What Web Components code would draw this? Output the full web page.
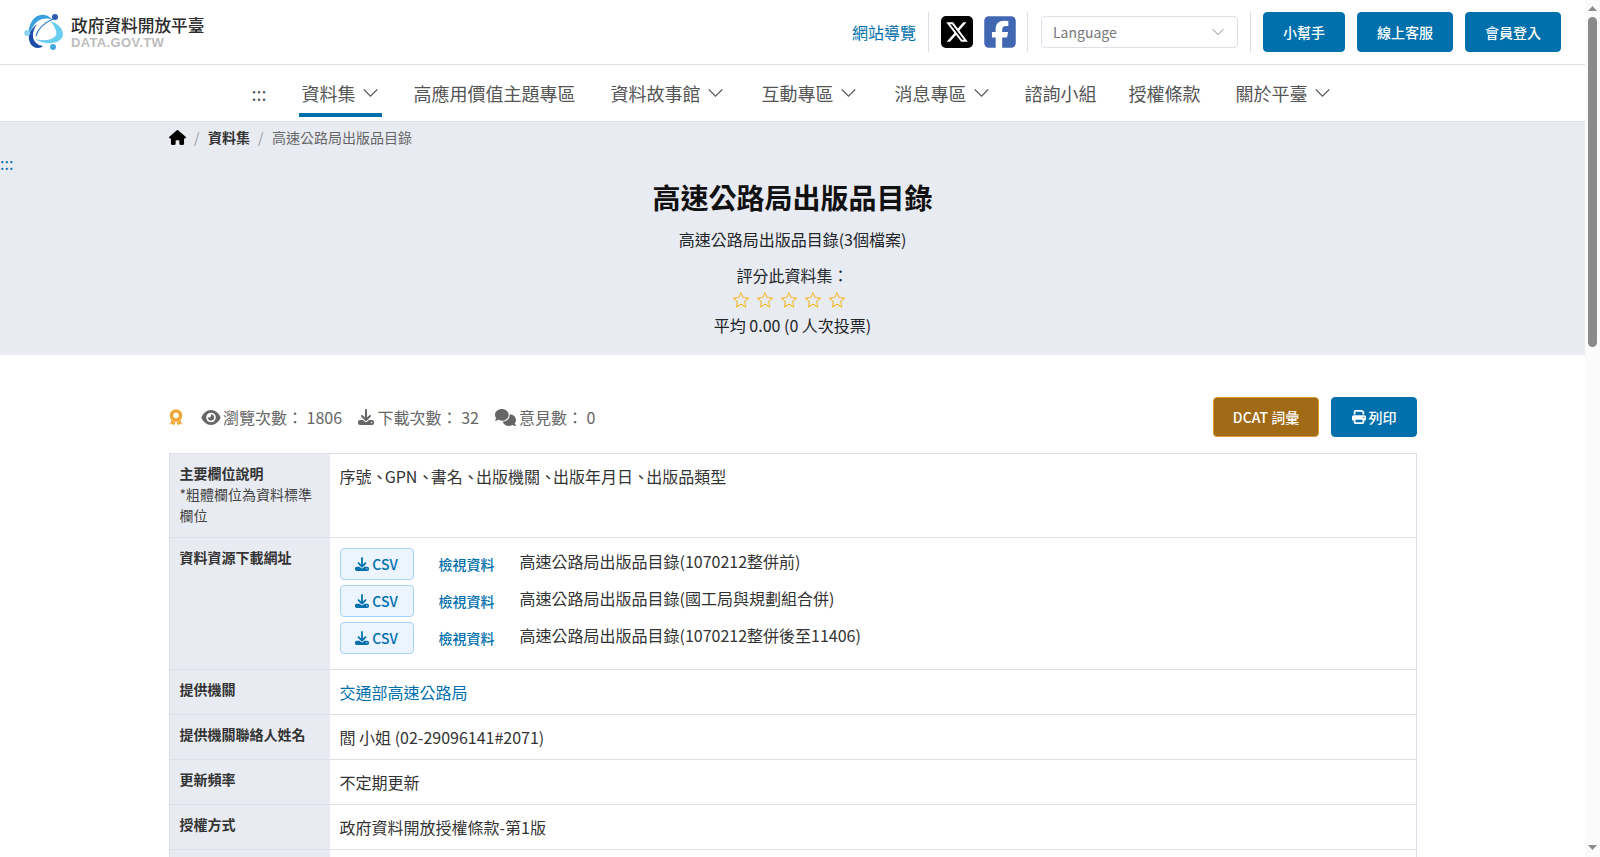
<!DOCTYPE html>
<html lang="zh-Hant"><head><meta charset="utf-8"><title>高速公路局出版品目錄</title>
<style>
html,body{margin:0;padding:0;height:857px;overflow:hidden;background:#fff}
body{font-family:"Noto Sans CJK TC","Noto Sans",sans-serif;color:#212529;font-size:16px;line-height:1.5}
.cm{letter-spacing:-2.8px}
</style></head><body>
<app-shell>
  <site-header></site-header>
  <main-nav></main-nav>
  <dataset-banner></dataset-banner>
  <main-content>
    <stats-bar></stats-bar>
    <data-table>
      <data-row label="主要欄位說明" note="*粗體欄位為資料標準欄位" first><span>序號<span class="cm">、</span>GPN<span class="cm">、</span>書名<span class="cm">、</span>出版機關<span class="cm">、</span>出版年月日<span class="cm">、</span>出版品類型</span></data-row>
      <data-row label="資料資源下載網址" tall>
        <download-item>高速公路局出版品目錄(1070212整併前)</download-item>
        <download-item>高速公路局出版品目錄(國工局與規劃組合併)</download-item>
        <download-item>高速公路局出版品目錄(1070212整併後至11406)</download-item>
      </data-row>
      <data-row label="提供機關" link>交通部高速公路局</data-row>
      <data-row label="提供機關聯絡人姓名">閻 小姐 (02-29096141#2071)</data-row>
      <data-row label="更新頻率">不定期更新</data-row>
      <data-row label="授權方式">政府資料開放授權條款-第1版</data-row>
      <data-row></data-row>
    </data-table>
  </main-content>
</app-shell>
<script>
const FONT='"Noto Sans CJK TC","Noto Sans",sans-serif';
const chev='<svg width="15" height="16" viewBox="0 0 15 16" fill="none" stroke="#555" stroke-width="1.1"><path d="M.8 4.500 7.500 11.200l6.700-6.700"/></svg>';
const P={
 home:['0 0 576 512','M575.8 255.5c0 18-15 32.1-32 32.1h-32l.7 160.2c0 2.7-.2 5.4-.5 8.1V472c0 22.1-17.9 40-40 40H456c-1.1 0-2.2 0-3.3-.1c-1.4 .1-2.8 .1-4.2 .1H416 392c-22.1 0-40-17.9-40-40V448 384c0-17.7-14.3-32-32-32H256c-17.7 0-32 14.3-32 32v64 24c0 22.1-17.9 40-40 40H160 128.1c-1.5 0-3-.1-4.5-.2c-1.2 .1-2.4 .2-3.6 .2H104c-22.1 0-40-17.9-40-40V360c0-.9 0-1.9 .1-2.8V287.6H32c-18 0-32-14-32-32.1c0-9 3-17 10-24L266.4 8c7-7 15-8 22-8s15 2 21 7L564.8 231.5c8 7 12 15 11 24z'],
 dl:['0 0 512 512','M288 32c0-17.7-14.3-32-32-32s-32 14.3-32 32V274.7l-73.4-73.4c-12.5-12.5-32.8-12.5-45.3 0s-12.5 32.8 0 45.3l128 128c12.5 12.5 32.8 12.5 45.3 0l128-128c12.5-12.5 12.5-32.8 0-45.3s-32.8-12.5-45.3 0L288 274.7V32zM64 352c-35.3 0-64 28.7-64 64v32c0 35.3 28.7 64 64 64H448c35.3 0 64-28.7 64-64V416c0-35.3-28.7-64-64-64H346.5l-45.3 45.3c-25 25-65.5 25-90.5 0L165.5 352H64zm368 56a24 24 0 1 1 0 48 24 24 0 1 1 0-48z'],
 eye:['0 0 576 512','M288 32c-80.8 0-145.5 36.8-192.6 80.6C48.6 156 17.3 208 2.5 243.7c-3.3 7.9-3.3 16.7 0 24.6C17.3 304 48.6 356 95.4 399.4C142.5 443.2 207.2 480 288 480s145.5-36.8 192.6-80.6c46.8-43.5 78.1-95.4 93-131.1c3.3-7.9 3.3-16.7 0-24.6c-14.9-35.7-46.2-87.7-93-131.1C433.5 68.8 368.8 32 288 32zM144 256a144 144 0 1 1 288 0 144 144 0 1 1 -288 0zm144-64c0 35.3-28.7 64-64 64c-7.1 0-13.9-1.2-20.3-3.3c-5.5-1.8-11.9 1.6-11.7 7.4c.3 6.9 1.3 13.8 3.2 20.7c13.7 51.2 66.4 81.6 117.6 67.9s81.6-66.4 67.9-117.6c-11.1-41.5-47.8-69.4-88.6-71.1c-5.8-.2-9.2 6.1-7.4 11.7c2.1 6.4 3.3 13.2 3.3 20.3z'],
 com:['0 0 640 512','M208 352c114.9 0 208-78.8 208-176S322.9 0 208 0S0 78.8 0 176c0 38.6 14.7 74.3 39.6 103.4c-3.5 9.4-8.7 17.7-14.2 24.7c-4.8 6.2-9.7 11-13.3 14.3c-1.8 1.6-3.3 2.9-4.3 3.7c-.5 .4-.9 .7-1.1 .8l-.2 .2 0 0 0 0C1 327.2-1.4 334.4 .8 340.9S9.1 352 16 352c21.8 0 43.8-5.6 62.1-12.5c9.2-3.5 17.8-7.4 25.3-11.4C134.1 343.3 169.8 352 208 352zM448 176c0 112.3-99.1 196.9-216.5 207C255.8 457.4 336.4 512 432 512c38.2 0 73.9-8.7 104.7-23.9c7.5 4 16 7.9 25.2 11.4c18.3 6.9 40.3 12.5 62.1 12.5c6.9 0 13.1-4.5 15.2-11.1c2.1-6.6-.2-13.8-5.8-17.9l0 0 0 0-.2-.2c-.2-.2-.6-.4-1.1-.8c-1-.8-2.5-2-4.3-3.7c-3.6-3.3-8.5-8.1-13.3-14.3c-5.5-7-10.7-15.4-14.2-24.7c24.9-29 39.6-64.7 39.6-103.4c0-92.8-84.9-168.9-192.6-175.5c.4 5.1 .6 10.3 .6 15.5z'],
 print:['0 0 512 512','M128 0C92.7 0 64 28.7 64 64v96h64V64H354.7L384 93.3V160h64V93.3c0-17-6.7-33.3-18.7-45.3L400 18.7C388 6.7 371.7 0 354.7 0H128zM384 352v32 64H128V384 368 352H384zm64 32h32c17.7 0 32-14.3 32-32V256c0-35.3-28.7-64-64-64H64c-35.3 0-64 28.7-64 64v96c0 17.7 14.3 32 32 32H64v64c0 35.3 28.7 64 64 64H384c35.3 0 64-28.7 64-64V384zM432 248a24 24 0 1 1 0 48 24 24 0 1 1 0-48z'],
 x:['0 0 512 512','M389.2 48h70.6L305.6 224.2 487 464H345L233.7 318.6 106.5 464H35.8L200.7 275.5 26.8 48H172.4L272.9 180.9 389.2 48zM364.4 421.8h39.1L151.1 88h-42L364.4 421.8z'],
 fb:['0 0 448 512','M64 32C28.7 32 0 60.7 0 96V416c0 35.3 28.7 64 64 64h98.2V334.2H109.4V256h52.8V222.3c0-87.1 39.4-127.5 125-127.5c16.2 0 44.2 3.2 55.7 6.4V172c-6-.6-16.5-1-29.6-1c-42 0-58.2 15.9-58.2 57.2V256h83.6l-14.4 78.2H255V480H384c35.3 0 64-28.7 64-64V96c0-35.3-28.7-64-64-64H64z']
};
const ico=(n,w,h,c)=>`<svg width="${w}" height="${h}" viewBox="${P[n][0]}" fill="${c}" style="display:block;flex:none"><path d="${P[n][1]}"/></svg>`;
function def(name,html){customElements.define(name,class extends HTMLElement{
  constructor(){super();this.attachShadow({mode:'open'}).innerHTML=html(this)}
});}

def('app-shell',()=>`<style>:host{display:flex;height:857px;overflow:hidden}
.main{flex:1;min-width:0;height:857px;overflow:hidden}
</style><div class="main"><slot></slot></div><page-scrollbar></page-scrollbar>`);

def('page-scrollbar',()=>`<style>:host{display:flex;flex-direction:column;align-items:center;width:15px;height:857px;background:#fbfbfb;flex:none}
.a{width:15px;display:flex;align-items:center;justify-content:center}
.t{width:9px;height:330px;background:#8b8b8b;border-radius:5px}
.s{flex:1}
</style><div class="a" style="height:17px"><svg width="9" height="5"><path d="M4.500 0 9 5H0z" fill="#8b8b8b"/></svg></div><div class="t"></div><div class="s"></div><div class="a" style="height:19px"><svg width="9" height="5"><path d="M4.500 5 9 0H0z" fill="#8b8b8b"/></svg></div>`);

def('site-logo',()=>`<style>:host{display:flex;align-items:center;gap:7px;font-family:${FONT}}
.t{display:flex;flex-direction:column}
.a{font-size:16.7px;line-height:21px;font-weight:500;color:#2b2b2b;white-space:nowrap}
.b{font:bold 13px/14px "Liberation Sans",sans-serif;color:#bdbdbd;letter-spacing:.35px;white-space:nowrap}
</style><svg width="40" height="38" viewBox="0 0 40 38" fill="none" style="display:block;flex:none">
<path d="M26 8C33 10 39 15 39 21C39 28 30 31 22 30C18 29.500 14 28 11 26C15 27 22 28 27 26C32 24 33 21 32 18C31 14 29 11 26 8Z" fill="#6accee"/>
<path d="M28 6C22 0 13 0 8 8C5 13 4 18 5 22C7 16 10 11 14 8C18 5 23 5 28 6Z" fill="#3aa0e0"/>
<path d="M5 22C4 28 7 35 14 35C16 35 18 34 19 33C13 32 10 29 9 24C8.500 20 10 15 13 11C9 14 6 18 5 22Z" fill="#1c4ea8"/>
<path d="M30 5.500C22 9 14 15 12 23" stroke="#2f7fd0" stroke-width="1.2"/>
<circle cx="31" cy="4" r="3" fill="#2a5db0"/><circle cx="3.200" cy="20" r="3" fill="#8fd4f2"/><circle cx="29" cy="34" r="3" fill="#4aa8e0"/>
</svg><div class="t"><span class="a">政府資料開放平臺</span><span class="b">DATA.GOV.TW</span></div>`);

def('action-button',h=>`<style>:host{display:inline-flex}
a{display:flex;align-items:center;justify-content:center;gap:3px;box-sizing:border-box;height:40px;width:${h.getAttribute('w')}px;border-radius:4px;background:${h.getAttribute('bg')||'#0070ad'};border:1px solid ${h.getAttribute('bd')||'#0070ad'};color:#fff;font:500 14px/1 ${FONT};white-space:nowrap}
</style><a><slot></slot></a>`);

def('site-header',()=>`<style>:host{display:flex;align-items:center;box-sizing:border-box;height:65px;border-bottom:1px solid #dde0e8;padding:0 24px;font-family:${FONT}}
.sp{flex:1}
.lnk{color:#0070ad;font-size:16px;margin-right:12px;white-space:nowrap}
.d{width:1px;height:40px;background:#dde0e8}
.soc{display:flex;gap:11px;margin:0 11px 0 12px}
.x{width:32px;height:32px;border-radius:5px;background:#000;display:flex;align-items:center;justify-content:center}
.sel{box-sizing:border-box;width:197px;height:32px;margin:0 12px 0 13px;border:1px solid #dde0e8;border-radius:4px;display:flex;align-items:center;justify-content:space-between;padding:0 12px 0 11px;color:#777;font-size:14px;background:#fff}
.btns{display:flex;gap:12px;margin-left:12px}
</style><site-logo></site-logo><div class="sp"></div><a class="lnk">網站導覽</a><div class="d"></div>
<div class="soc"><div class="x">${ico('x',24,24,'#fff')}</div>${ico('fb',32,36,'#4267b2').replace('display:block','display:block;margin:-2px 0')}</div><div class="d"></div>
<div class="sel"><span>Language</span><svg width="14" height="14" viewBox="0 0 16 16" fill="none" stroke="#aaa" stroke-width="1.2"><path d="M2 5l6 6 6-6"/></svg></div><div class="d"></div>
<div class="btns"><action-button w="82">小幫手</action-button><action-button w="96">線上客服</action-button><action-button w="96">會員登入</action-button></div>`);

def('nav-item',h=>`<style>:host{display:block;margin-left:${h.getAttribute('ml')||31}px}
a{display:flex;align-items:center;gap:7px;height:52px;box-sizing:border-box;padding:8px ${h.hasAttribute('active')?'4px':'2px'} 0 ${h.hasAttribute('active')?'3px':'2px'};color:#555;font-size:18px;white-space:nowrap;border-bottom:4px solid ${h.hasAttribute('active')?'#0070ad':'transparent'};font-family:${FONT}}
svg{display:block}
</style><a><slot></slot>${h.hasAttribute('menu')?chev:''}</a>`);

def('main-nav',()=>`<style>:host{display:flex;justify-content:center;box-sizing:border-box;height:57px;border-bottom:1px solid #dde0e8;padding-right:4px}
nav{display:flex;height:52px}
</style><nav><nav-item ml="0">:::</nav-item><nav-item ml="30" active menu>資料集</nav-item><nav-item ml="30">高應用價值主題專區</nav-item><nav-item ml="31" menu>資料故事館</nav-item><nav-item ml="35" menu>互動專區</nav-item><nav-item ml="35" menu>消息專區</nav-item><nav-item ml="32">諮詢小組</nav-item><nav-item ml="28">授權條款</nav-item><nav-item ml="31" menu>關於平臺</nav-item></nav>`);

const star='<svg width="18" height="18" viewBox="0 0 24 24" fill="none" stroke="#f5b82e" stroke-width="1.4" stroke-linejoin="round" style="display:block"><path d="M12 2.2l3 6.5 7.1.8-5.3 4.8 1.5 7-6.3-3.6-6.3 3.6 1.5-7L1.900 9.500l7.100-.8z"/></svg>';
def('dataset-banner',()=>`<style>:host{display:block;height:233px;background:#e8ebf1;font-family:${FONT};color:#212529;overflow:hidden}
.bc{display:flex;align-items:center;height:30px;padding-left:169px;font-size:14px;color:#666}
.bc b{color:#333;font-weight:700}.bc i{font-style:normal;color:#999;margin:0 8.500px 0 8px}
.tri{color:#0070ad;font-size:16px;line-height:20px;height:20px;margin-top:1px}
.c{display:flex;flex-direction:column;align-items:center}
h1{margin:4px 0 0;font-size:28px;line-height:40px;font-weight:700;color:#111}
.s{margin-top:10px;line-height:24px}.r{margin-top:12px;line-height:24px}
.st{display:flex;gap:6px;height:24px;align-items:center;margin-top:1px;padding-right:8px}
.av{line-height:24px;margin-top:1px}
</style><div class="bc">${ico('home',17,15,'#000')}<i>/</i><b>資料集</b><i>/</i><span>高速公路局出版品目錄</span></div>
<div class="tri">:::</div>
<div class="c"><h1>高速公路局出版品目錄</h1><div class="s">高速公路局出版品目錄(3個檔案)</div><div class="r">評分此資料集：</div>
<div class="st">${star.repeat(5)}</div><div class="av">平均 0.00 (0 人次投票)</div></div>`);

def('main-content',()=>`<style>:host{display:block;padding:42px 168px 0 169px}</style><slot></slot>`);

def('stats-bar',()=>`<style>:host{display:flex;align-items:center;height:40px;margin-bottom:16px;color:#666;font-size:16px;font-family:${FONT}}
.g{display:flex;align-items:center;white-space:nowrap}
.sp{flex:1}.btn{display:flex;gap:12px}
</style>
<svg width="14" height="17" viewBox="0 0 14 17" style="margin-right:18px;flex:none"><path d="M2.500 11 1 15.500l2.500-.5 1.500 1.500 1.500-3zM11.500 11 13 15.500l-2.500-.5L9 16.500l-1.500-3z" fill="#f0a73a"/><circle cx="7" cy="6.500" r="4.500" fill="none" stroke="#f0a73a" stroke-width="3.500"/></svg>
<div class="g" style="margin-right:15.500px">${ico('eye',20,17,'#666')}<span style="margin-left:2px">瀏覽次數： 1806</span></div>
<div class="g" style="margin-right:16px">${ico('dl',16,16,'#666')}<span style="margin-left:4px">下載次數： 32</span></div>
<div class="g">${ico('com',21,17,'#666')}<span style="margin-left:3px">意見數： 0</span></div>
<div class="sp"></div><div class="btn"><action-button w="106" bg="#a16a16" bd="#dc9a35">DCAT 詞彙</action-button><action-button w="86">${ico('print',14,14,'#fff')}列印</action-button></div>`);

def('data-table',()=>`<style>:host{display:block;border:1px solid #dde0e8;border-bottom:0}</style><slot></slot>`);

def('data-row',h=>{
 const l=h.getAttribute('label')||'',n=h.getAttribute('note');
 return `<style>:host{display:flex;border-bottom:1px solid #dde0e8;font-family:${FONT}}
.l{box-sizing:border-box;width:159.500px;flex:none;background:#e8ebf1;padding:9px 10px ${h.hasAttribute('first')?'11px':'10px'} 9.500px;font-size:14px;line-height:21px;color:#333}
.l b{font-weight:700;display:block}.l span{display:block;color:#444}
.v{flex:1;padding:${h.hasAttribute('tall')?'10px 10px 15px':'10px 10px 10px'};font-size:16px;line-height:24px;color:${h.hasAttribute('link')?'#0070ad':'#333'};min-height:24px;display:flex;flex-direction:column;gap:5px}
</style><div class="l">${l?`<b>${l}</b>`:''}${n?`<span>${n}</span>`:''}</div><div class="v"><slot></slot></div>`;
});

def('download-item',()=>`<style>:host{display:flex;align-items:flex-start;height:32px;font-family:${FONT};color:#333;font-size:16px;line-height:24px}
.b{box-sizing:border-box;width:74px;height:32px;background:#ebf4ff;border:1px solid #a9d3f5;border-radius:4px;display:flex;align-items:center;justify-content:center;gap:3px;color:#0070ad;font-size:14px;font-weight:500}
.v{margin-left:25px;width:81px;color:#0070ad;font-size:14px;line-height:32px;font-weight:500;flex:none}
.t{white-space:nowrap;margin-top:1px}
</style><div class="b">${ico('dl',14,14,'#0070ad')}CSV</div><div class="v">檢視資料</div><div class="t"><slot></slot></div>`);
</script>
</body></html>
